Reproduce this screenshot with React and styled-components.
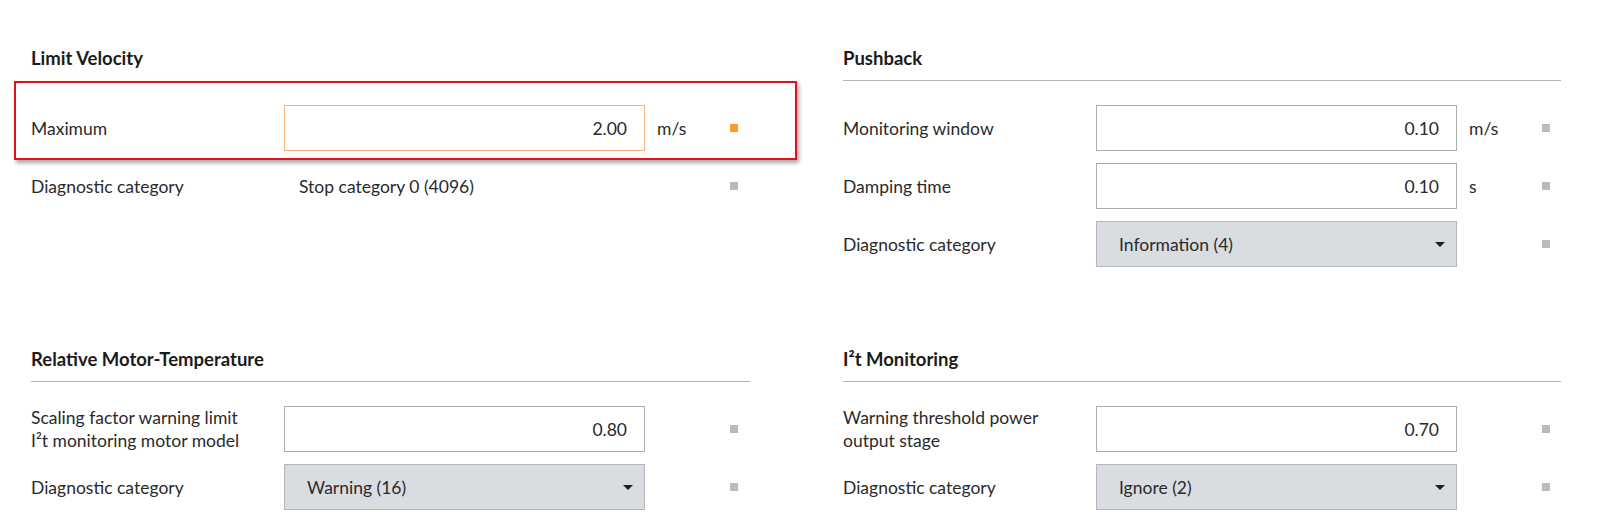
import React from "react"
import styled, { createGlobalStyle } from "styled-components"

const GlobalStyle = createGlobalStyle`
  html, body {
    margin: 0;
    background: #ffffff;
  }
  body {
    font-family: Lato, "Open Sans", sans-serif;
    color: #2a2a2a;
  }
`

const Page = styled.div`
  display: grid;
  grid-template-columns: 719px 718px;
  column-gap: 93px;
  row-gap: 82px;
  padding: 48px 39px 0 31px;
`

const Section = styled.section`
  position: relative;
`

const Title = styled.h2`
  margin: 0;
  font-size: 18.5px;
  line-height: 20px;
  font-weight: 700;
  color: #1b1b1b;
`

const Divider = styled.div`
  height: 1px;
  margin-top: 12px;
  background: ${(p) => (p.$hidden ? "transparent" : "#b3b3b3")};
`

const Rows = styled.div`
  display: flex;
  flex-direction: column;
  gap: 12px;
  margin-top: 24px;
`

const Row = styled.div`
  display: grid;
  grid-template-columns: 253px 361px 85px 8px;
  align-items: center;
  height: 46px;
  font-size: 17.5px;
`

const Label = styled.div`
  line-height: 23px;
`

const Field = styled.div`
  box-sizing: border-box;
  height: 46px;
  display: flex;
  align-items: center;
  justify-content: flex-end;
  padding: 0 17px;
  background: #ffffff;
  border: 1px solid ${(p) => (p.$active ? "#f7b07a" : "#adadad")};
`

const Static = styled.div`
  padding-left: 15px;
`

const Select = styled.div`
  box-sizing: border-box;
  height: 46px;
  display: flex;
  align-items: center;
  justify-content: space-between;
  padding: 0 11px 0 22px;
  background: #d9dce0;
  border: 1px solid #b3b6ba;
`

const Caret = styled.span`
  width: 0;
  height: 0;
  border-left: 5px solid transparent;
  border-right: 5px solid transparent;
  border-top: 5px solid #1e1e1e;
`

const Unit = styled.div`
  padding-left: 12px;
`

const Marker = styled.span`
  width: 8px;
  height: 8px;
  background: ${(p) => (p.$active ? "#ff9b21" : "#b8bcc2")};
`

const Highlight = styled.div`
  position: absolute;
  left: -17px;
  top: 33px;
  width: 783px;
  height: 79px;
  box-sizing: border-box;
  border: 2px solid #e3101b;
  box-shadow: 2px 3px 4px rgba(0, 0, 0, 0.35);
  pointer-events: none;
`

const sections = [
  {
    title: "Limit Velocity",
    highlight: true,
    rows: [
      { label: "Maximum", kind: "input", value: "2.00", unit: "m/s", active: true },
      { label: "Diagnostic category", kind: "text", value: "Stop category 0 (4096)" },
    ],
  },
  {
    title: "Pushback",
    rows: [
      { label: "Monitoring window", kind: "input", value: "0.10", unit: "m/s" },
      { label: "Damping time", kind: "input", value: "0.10", unit: "s" },
      { label: "Diagnostic category", kind: "select", value: "Information (4)" },
    ],
  },
  {
    title: "Relative Motor-Temperature",
    rows: [
      {
        label: ["Scaling factor warning limit", "I²t monitoring motor model"],
        kind: "input",
        value: "0.80",
      },
      { label: "Diagnostic category", kind: "select", value: "Warning (16)" },
    ],
  },
  {
    title: "I²t Monitoring",
    rows: [
      {
        label: ["Warning threshold power", "output stage"],
        kind: "input",
        value: "0.70",
      },
      { label: "Diagnostic category", kind: "select", value: "Ignore (2)" },
    ],
  },
]

function Value({ row }) {
  if (row.kind === "input") return <Field $active={row.active}>{row.value}</Field>
  if (row.kind === "select")
    return (
      <Select>
        {row.value}
        <Caret />
      </Select>
    )
  return <Static>{row.value}</Static>
}

export default function App() {
  return (
    <>
      <GlobalStyle />
      <Page>
        {sections.map((s) => (
          <Section key={s.title}>
            <Title>{s.title}</Title>
            <Divider $hidden={s.highlight} />
            <Rows>
              {s.rows.map((r, i) => (
                <Row key={i}>
                  <Label>
                    {Array.isArray(r.label)
                      ? r.label.map((l, j) => <div key={j}>{l}</div>)
                      : r.label}
                  </Label>
                  <Value row={r} />
                  <Unit>{r.unit}</Unit>
                  <Marker $active={r.active} />
                </Row>
              ))}
            </Rows>
            {s.highlight && <Highlight />}
          </Section>
        ))}
      </Page>
    </>
  )
}
